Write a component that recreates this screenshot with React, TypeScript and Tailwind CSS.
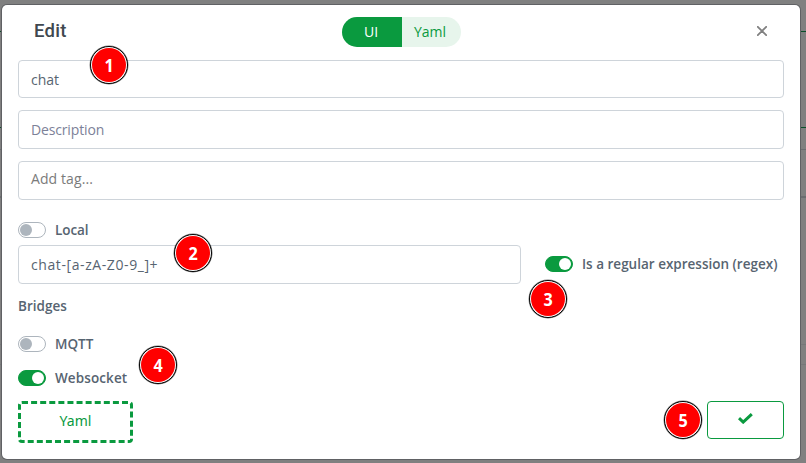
import type { ReactNode } from "react";

function Toggle({ on = false, label, text }: { on?: boolean; label: string; text: string }) {
  return (
    <label className="flex h-4 items-center">
      <span
        className={`flex h-4 w-7 shrink-0 items-center rounded-full border ${
          on ? "justify-end border-[#0a9a3f] bg-[#0a9a3f] pr-px" : "justify-start border-[#adb5bd] bg-white pl-px"
        }`}
      >
        <span className={`size-3 rounded-full ${on ? "bg-white" : "bg-[#adb5bd]"}`} />
      </span>
      <span className={`ml-[9px] pb-px whitespace-nowrap leading-4 font-semibold ${text}`}>{label}</span>
    </label>
  );
}

function Field({ className, children }: { className: string; children: ReactNode }) {
  return (
    <div className={`flex items-center rounded-[4px] border border-[#ced4da] bg-white pl-3 whitespace-nowrap ${className}`}>
      {children}
    </div>
  );
}

function Marker({ n, place }: { n: number; place: string }) {
  return (
    <div className={`absolute flex size-[38px] items-center justify-center rounded-full border border-black bg-white p-[1px] ring-[0.5px] ring-black/50 ${place}`}>
      <div className="flex size-full items-center justify-center rounded-full bg-[#ff0000] font-['Noto_Sans',sans-serif] text-[18px] leading-none font-bold text-white">
        <span className="scale-x-90">{n}</span>
      </div>
    </div>
  );
}

export default function App() {
  return (
    <main className="relative h-[463px] w-[806px] overflow-hidden bg-[#808080] pt-[5px] pl-[2px] font-['Open_Sans',sans-serif] text-[14px] text-[#576471]">
      <div className="absolute top-[31px] left-0 h-px w-full bg-[#0b4f29]" />
      <div className="absolute top-[127px] left-0 h-px w-full bg-[#0b4f29]" />
      <div className="absolute top-[149px] left-0 h-px w-full bg-[#6b6d70]" />
      <div className="absolute top-[196px] left-0 h-[2px] w-full bg-[#6b6d70]" />
      <div className="absolute top-[344px] left-0 h-px w-full bg-[#767779]" />
      <div className="absolute top-[364px] left-0 h-px w-full bg-[#767779]" />
      <section className="relative flex h-[454px] w-[798px] flex-col rounded-[5px] bg-white px-4 shadow-[0_0_0_1px_#606164]">
        <header className="flex h-[55px] shrink-0 items-start">
          <h1 className="w-[324px] pt-[14px] pl-4 font-['Roboto',sans-serif] text-[18.5px] leading-6 font-medium tracking-[0.3px] text-[#40484f]">Edit</h1>
          <div className="mt-3 flex h-[30px] w-[119px] overflow-hidden rounded-full bg-[#e7f5ec] text-[14px]">
            <span className="flex w-[60px] items-center justify-center bg-[#0a9a3f] pr-[2px] pb-px text-white">UI</span>
            <span className="flex flex-1 items-center pb-px pl-[12px] text-[#0a9a3f]">Yaml</span>
          </div>
          <svg className="mt-[21px] ml-[296px]" width="10" height="10" viewBox="0 0 10 10" fill="none" stroke="#808080" strokeWidth="1.8" strokeLinecap="round">
            <path d="M.8.8 9.2 9.2M9.2.8.8 9.2" />
          </svg>
        </header>
        <Field className="h-[38px] shrink-0"><span>chat</span></Field>
        <Field className="mt-3 h-[39px] shrink-0 text-[#7c8198]"><span className="tracking-[-0.15px]">Description</span></Field>
        <Field className="mt-3 h-[39px] shrink-0 pb-1 text-[#7b7b7b]"><span className="tracking-[0.1px]">Add tag...</span></Field>
        <div className="mt-[22px]"><Toggle label="Local" text="text-[13.5px] tracking-[-0.1px]" /></div>
        <div className="mt-[7px] flex items-start">
          <Field className="h-[39px] w-[503px] shrink-0"><span className="tracking-[0.59px]">chat-[a-zA-Z0-9_]+</span></Field>
          <div className="mt-[11px] ml-6"><Toggle on label="Is a regular expression (regex)" text="-ml-px text-[13.5px]" /></div>
        </div>
        <div className="mt-[14px] h-4 text-[13.5px] leading-4 font-semibold">Bridges</div>
        <div className="mt-[22px] flex flex-col gap-[18px]">
          <Toggle label="MQTT" text="text-[13.5px]" />
          <Toggle on label="Websocket" text="text-[13.5px] tracking-[0.1px]" />
        </div>
        <footer className="mt-[15px] flex items-start justify-between">
          <button className="flex h-[42px] w-[115px] items-center justify-center rounded-[4px] border-3 border-dashed border-[#0a9a3f] pb-[3px] font-['Noto_Sans',sans-serif] text-[14px] text-[#0a9a3f]">Yaml</button>
          <button aria-label="Save" className="flex h-[38px] w-[77px] items-center justify-center rounded-[4px] border border-[#0a9a3f]">
            <svg className="mb-[3px]" width="15" height="11" viewBox="0 0 15 11" fill="none" stroke="#0a9a3f" strokeWidth="3">
              <path d="M1 5.1 5.2 9.1 13.8 1.1" />
            </svg>
          </button>
        </footer>
      </section>
      <Marker n={1} place="top-[46px] left-[90px]" />
      <Marker n={2} place="top-[234px] left-[174px]" />
      <Marker n={3} place="top-[280px] left-[529px]" />
      <Marker n={4} place="top-[346px] left-[139px]" />
      <Marker n={5} place="top-[401px] left-[664px]" />
    </main>
  );
}
